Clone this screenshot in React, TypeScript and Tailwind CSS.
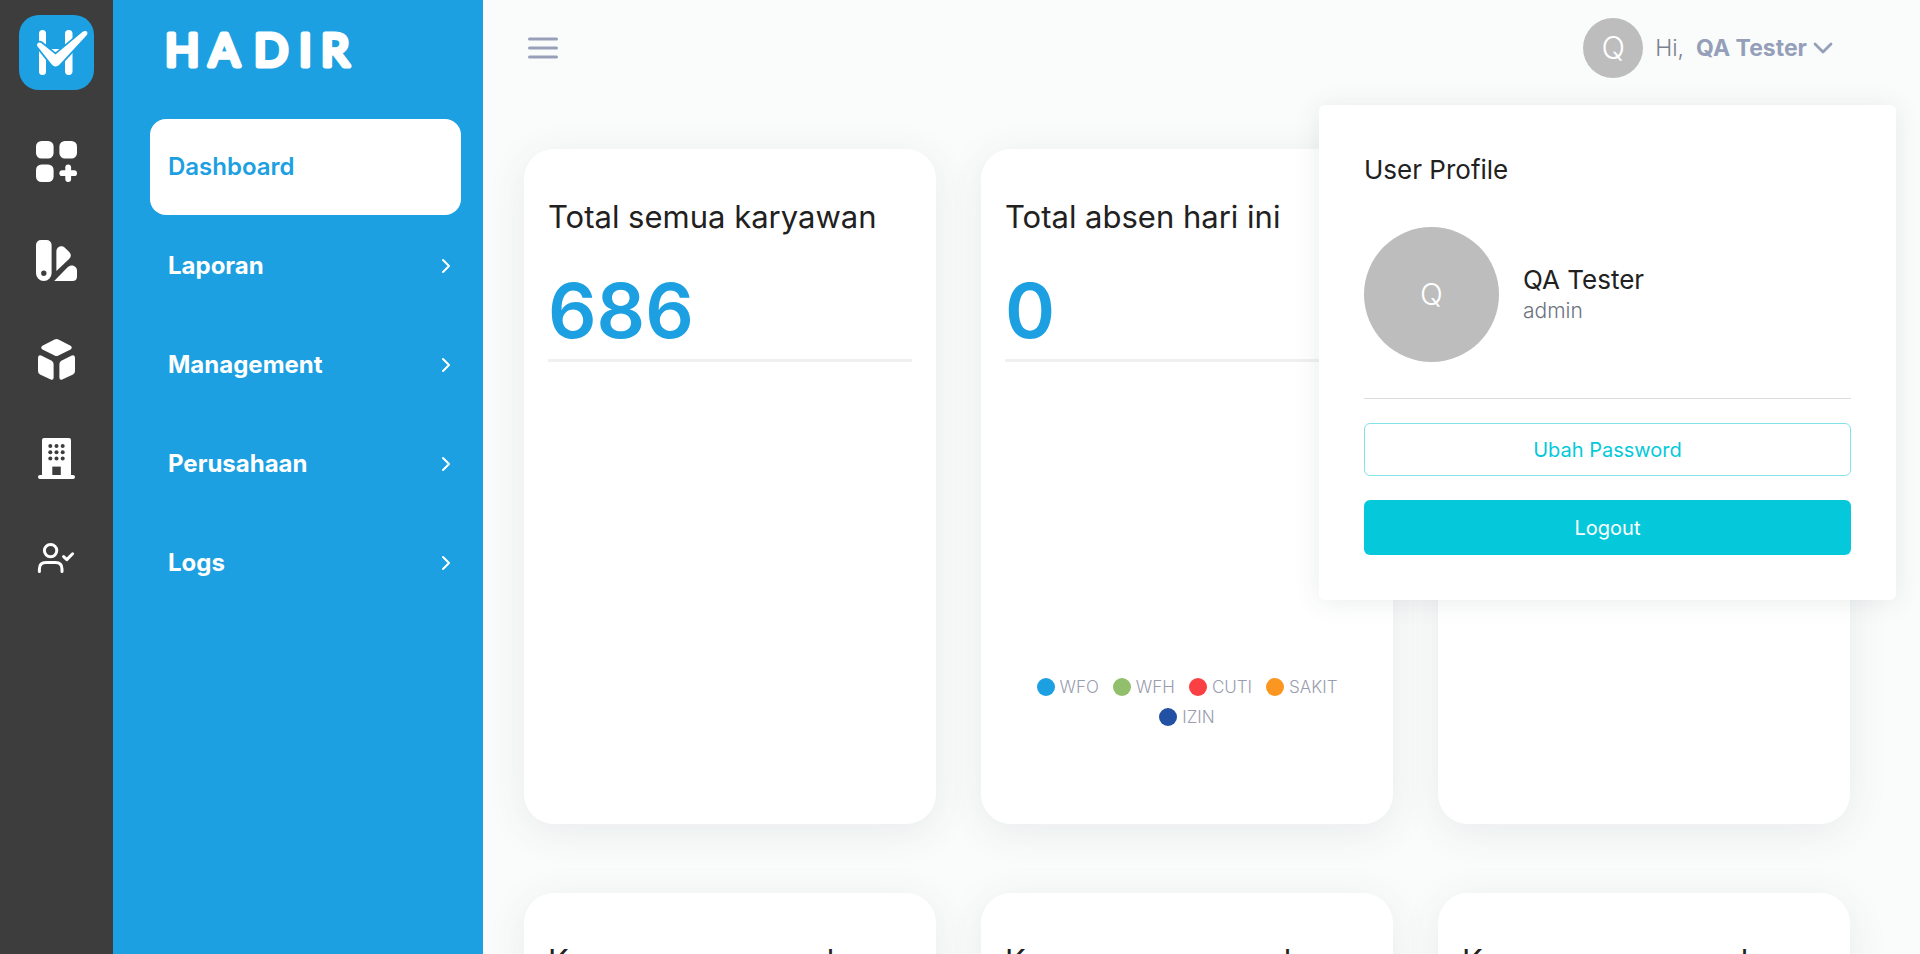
import type { ReactNode } from "react";

function Logo() {
  return (
    <svg viewBox="0 0 75 75" className="size-[75px]" aria-hidden="true">
      <rect width="75" height="75" rx="20" fill="#1ca0e2" />
      <rect x="20" y="15" width="7" height="45" rx="3.5" fill="#fff" />
      <rect x="46" y="15" width="7.5" height="45" rx="3.7" fill="#fff" />
      <path d="M31 34H42L36.5 39Z" fill="#fff" />
      <path
        d="M18.4 31.2C17 28.6 20.2 26.4 22.4 28.2L36.5 39.6L64 16.6C67 14.6 70 17.4 67.6 20.3L41.5 48.5C38 52.4 35 52.4 32 48.5Z"
        fill="#fff"
        stroke="#1ca0e2"
        strokeWidth="3.6"
        paintOrder="stroke"
      />
    </svg>
  );
}

function Wordmark() {
  return (
    <svg viewBox="0 0 200 60" className="h-[60px] w-[200px]" role="img" aria-label="HADIR">
      <text
        x="2 46 91 136 158"
        y="46"
        fontFamily="Lato, sans-serif"
        fontWeight="400"
        fontSize="45"
        fill="#fff"
        stroke="#fff"
        strokeWidth="5"
        strokeLinejoin="round"
      >
        HADIR
      </text>
    </svg>
  );
}

const railIcons: { label: string; art: ReactNode }[] = [
  {
    label: "Dashboard",
    art: (
      <>
        <rect x="0" y="0" width="17.6" height="17.6" rx="5.5" />
        <rect x="23.4" y="0" width="17.6" height="17.6" rx="5.5" />
        <rect x="0" y="23.4" width="17.6" height="17.6" rx="5.5" />
        <rect x="23.4" y="29.3" width="17.6" height="5.8" rx="2.9" />
        <rect x="29.3" y="23.4" width="5.8" height="17.6" rx="2.9" />
      </>
    ),
  },
  {
    label: "Laporan",
    art: (
      <>
        <path
          fillRule="evenodd"
          d="M5 0H10.6A5 5 0 0 1 15.6 5V33.2A7.8 7.8 0 0 1 0 33.2V5A5 5 0 0 1 5 0ZM7.8 30.6A2.7 2.7 0 1 0 7.8 36A2.7 2.7 0 1 0 7.8 30.6Z"
        />
        <path d="M20.4 31V11C20.4 7 25.6 4.6 28.6 7.4L33 11.8C35.8 14.8 35 17 32.8 19.2Z" />
        <path d="M18.2 41L31.6 27.2C36 23.6 41 26.2 41 31V36.4C41 39.6 39.4 41 36.4 41Z" />
      </>
    ),
  },
  {
    label: "Management",
    art: (
      <>
        <path d="M18.6 .5Q20.5 -.5 22.4 .5L34.6 6.8Q37 8.6 34.6 10.4L22.4 16.6Q20.5 17.6 18.6 16.6L6.4 10.4Q4 8.6 6.4 6.8Z" />
        <path d="M2 19Q2 15.4 5.2 16.6L15.2 21.4Q17.6 22.6 17.6 25V38.6Q17.6 41.4 14.8 40.6L4 35.6Q2 34.6 2 32Z" />
        <path d="M39 19Q39 15.4 35.8 16.6L25.8 21.4Q23.4 22.6 23.4 25V38.6Q23.4 41.4 26.2 40.6L37 35.6Q39 34.6 39 32Z" />
      </>
    ),
  },
  {
    label: "Perusahaan",
    art: (
      <>
        <path d="M8 0H33Q35 0 35 2V37H37A2 2 0 0 1 37 41H4A2 2 0 0 1 4 37H6V2Q6 0 8 0Z" />
        <g fill="#3d3d3d">
          {[8, 14.2, 20.4].map((y) =>
            [14.3, 20.5, 26.7].map((x) => <circle key={`${x}-${y}`} cx={x} cy={y} r="2" />)
          )}
          <rect x="16.3" y="28.6" width="8.5" height="8.4" />
        </g>
      </>
    ),
  },
  {
    label: "Logs",
    art: (
      <g fill="none" stroke="#fff" strokeWidth="3" strokeLinecap="round" strokeLinejoin="round">
        <circle cx="14.6" cy="13.6" r="6.2" />
        <path d="M3.4 34.6V32Q3.4 25.6 10 25.6H19.4Q26 25.6 26 32V34.6" />
        <path d="M27.6 19.6L30.8 22.6L36.6 16.8" />
      </g>
    ),
  },
];

const menu = ["Laporan", "Management", "Perusahaan", "Logs"];

const legend = [
  { label: "WFO", dot: "bg-[#1ca0e2]" },
  { label: "WFH", dot: "bg-[#91bf6b]" },
  { label: "CUTI", dot: "bg-[#fa4043]" },
  { label: "SAKIT", dot: "bg-[#fb9720]" },
  { label: "IZIN", dot: "bg-[#2250a2]" },
];

function Card({ title, value, children }: { title: string; value?: string; children?: ReactNode }) {
  return (
    <section className="flex h-[675px] flex-col rounded-[30px] bg-white px-6 pt-11 shadow-[0_8px_40px_rgba(50,65,90,0.09)]">
      <h2 className="text-[31px] leading-[48px] text-[#212121]">{title}</h2>
      {value && (
        <p className="mt-5 border-b-[3px] border-[#f0f0f0] text-[76px] leading-[98px] font-semibold text-[#1ca0e2]">
          {value}
        </p>
      )}
      {children}
    </section>
  );
}

export default function App() {
  return (
    <div className="flex h-screen overflow-hidden bg-[#fafcfb] font-[Inter,sans-serif]">
      <nav aria-label="Modul" className="flex w-[113px] shrink-0 flex-col items-center bg-[#3d3d3d] pt-[15px]">
        <a href="#beranda" aria-label="Hadir">
          <Logo />
        </a>
        <div className="mt-[51px] flex flex-col gap-[58px]">
          {railIcons.map((item) => (
            <a key={item.label} href={`#${item.label}`} aria-label={item.label}>
              <svg viewBox="0 0 41 41" className="size-[41px] overflow-visible" fill="#fff" aria-hidden="true">
                {item.art}
              </svg>
            </a>
          ))}
        </div>
      </nav>

      <aside className="w-[370px] shrink-0 bg-[#1ca0e2] pt-5 pr-[22px] pl-[37px]">
        <div className="pl-[13px]">
          <Wordmark />
        </div>
        <nav aria-label="Menu" className="mt-[39px] flex flex-col gap-[3px] text-[24px] font-bold">
          <a href="#dashboard" className="flex h-24 items-center rounded-2xl bg-white px-[18px] font-semibold text-[#1ca0e2]">
            Dashboard
          </a>
          {menu.map((item) => (
            <button key={item} type="button" className="flex h-24 items-center justify-between pr-[10px] pl-[18px] text-white">
              {item}
              <svg viewBox="0 0 10 16" className="h-4 w-[10px]" fill="none" stroke="#fff" strokeWidth="2" strokeLinecap="round" strokeLinejoin="round" aria-hidden="true">
                <path d="M2 2L8 8L2 14" />
              </svg>
            </button>
          ))}
        </nav>
      </aside>

      <div className="relative flex min-w-0 flex-1 flex-col">
        <header className="flex h-24 shrink-0 items-center justify-between pr-[87px] pl-[45px]">
          <button type="button" aria-label="Buka menu">
            <svg viewBox="0 0 30 22" className="h-[22px] w-[30px]" stroke="#989fb8" strokeWidth="3" strokeLinecap="round" aria-hidden="true">
              <path d="M1.5 2H28.5M1.5 11H28.5M1.5 20H28.5" />
            </svg>
          </button>
          <button type="button" aria-expanded="true" className="flex items-center text-[23px]">
            <span className="mr-3 flex size-[60px] items-center justify-center rounded-full bg-[#bdbdbd] text-[31px] font-light text-white">Q</span>
            <span className="mr-3 font-light text-[#7b8190]">Hi,</span>
            <span className="mr-[6px] font-bold text-[#959fb9]">QA Tester</span>
            <svg viewBox="0 0 20 14" className="h-[14px] w-5" fill="none" stroke="#959fb9" strokeWidth="2.8" strokeLinecap="round" strokeLinejoin="round" aria-hidden="true">
              <path d="M2 3L10 11L18 3" />
            </svg>
          </button>
        </header>

        <main className="grid grid-cols-3 gap-x-[45px] gap-y-[69px] pt-[53px] pr-[70px] pl-[41px]">
          <Card title="Total semua karyawan" value="686" />
          <Card title="Total absen hari ini" value="0">
            <ul className="mx-auto mt-[310px] flex w-[330px] flex-wrap justify-center gap-x-[14px] text-[17px] leading-[30px] font-light text-[#9a9daf]">
              {legend.map((item) => (
                <li key={item.label} className="flex items-center gap-[5px]">
                  <span className={`size-[18px] rounded-full ${item.dot}`} />
                  {item.label}
                </li>
              ))}
            </ul>
          </Card>
          <Card title="Total izin hari ini" value="0" />
          <Card title="Karyawan yg masuk" />
          <Card title="Karyawan yg masuk" />
          <Card title="Karyawan yg masuk" />
        </main>

        <section
          aria-label="User Profile"
          className="absolute top-[105px] right-6 w-[577px] rounded-md bg-white p-[45px] shadow-[0_2px_26px_rgba(50,65,70,0.1)]"
        >
          <h3 className="text-[26px] leading-10 text-[#212121]">User Profile</h3>
          <div className="mt-[37px] flex items-center gap-6">
            <span className="flex size-[135px] items-center justify-center rounded-full bg-[#bdbdbd] text-[30px] font-light text-white">Q</span>
            <div>
              <p className="text-[26px] leading-8 text-[#212121]">QA Tester</p>
              <p className="text-[21px] leading-[30px] font-light text-[#6b7280]">admin</p>
            </div>
          </div>
          <hr className="mt-9 border-[#dadcdf]" />
          <button type="button" className="mt-6 h-[53px] w-full rounded-md border border-[#83e3ea] text-[20px] text-[#05c9da]">
            Ubah Password
          </button>
          <button type="button" className="mt-6 h-[55px] w-full rounded-md bg-[#05c9da] text-[20px] text-white">
            Logout
          </button>
        </section>
      </div>
    </div>
  );
}
